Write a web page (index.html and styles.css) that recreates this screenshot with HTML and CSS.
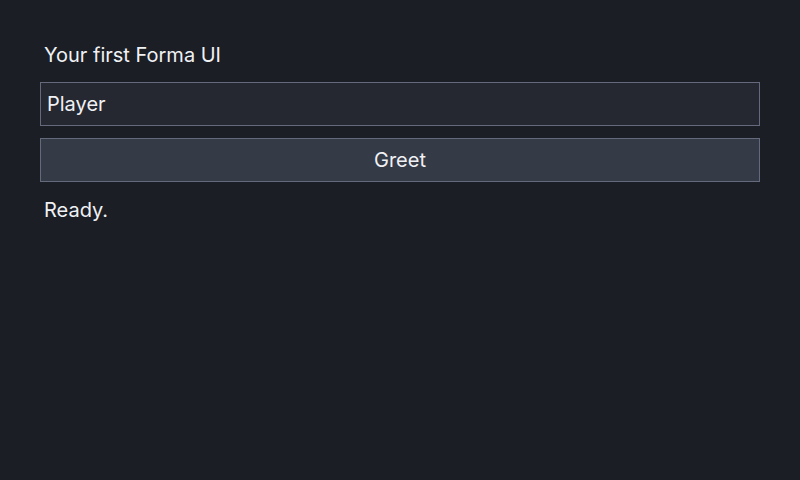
FILE: index.html
```html
<!DOCTYPE html>
<html>
<head>
<meta charset="utf-8">
<link rel="stylesheet" href="styles.css">
</head>
<body>
<main class="app">
  <div class="title">Your first Forma UI</div>
  <div class="input">Player</div>
  <div class="button">Greet</div>
  <div class="status">Ready.</div>
</main>
</body>
</html>
```
FILE: styles.css
```css
html, body {
  margin: 0;
  padding: 0;
  background: #1b1e25;
  width: 800px;
  height: 480px;
  overflow: hidden;
}
.app {
  font-family: "Inter", "Noto Sans", sans-serif;
  font-size: 20px;
  color: #f0f1f4;
  padding: 43px 40px 0 40px;
  display: flex;
  flex-direction: column;
}
.title {
  line-height: 24px;
  padding-left: 4px;
}
.input {
  margin-top: 15px;
  height: 42px;
  line-height: 42px;
  background: #252830;
  border: 1px solid #646a7c;
  padding-left: 6px;
}
.button {
  margin-top: 12px;
  height: 42px;
  line-height: 42px;
  background: #353a47;
  border: 1px solid #646a7c;
  text-align: center;
}
.status {
  margin-top: 16px;
  line-height: 24px;
  padding-left: 4px;
}
```
